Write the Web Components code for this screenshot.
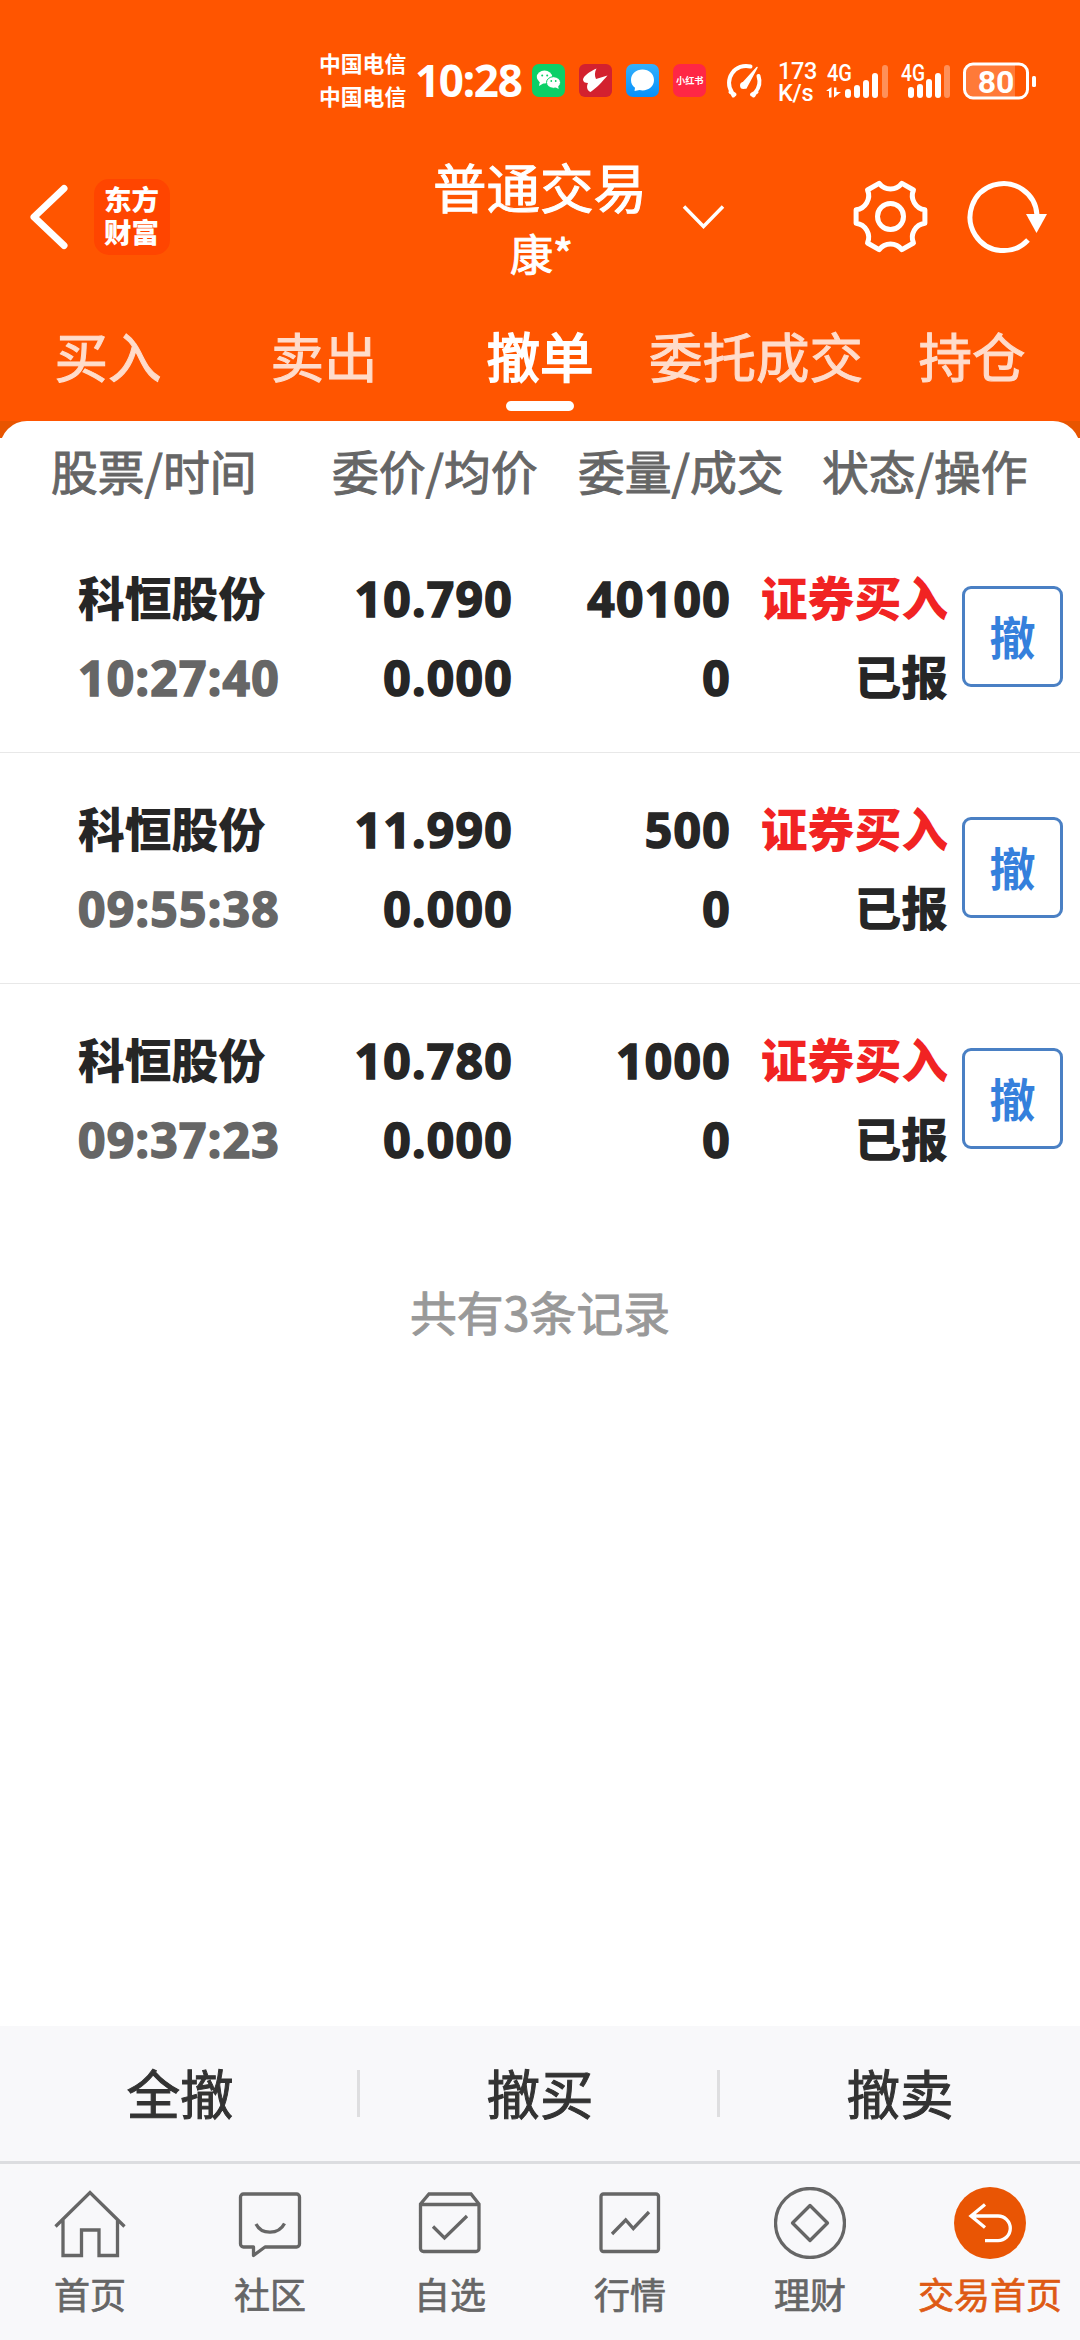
<!DOCTYPE html>
<html lang="zh-CN">
<head>
<meta charset="UTF-8">
<meta name="viewport" content="width=device-width, initial-scale=1.0">
<title>普通交易 - 撤单</title>
<style>
    * { box-sizing: border-box; }
    body {
        margin: 0;
        width: 1080px;
        height: 2340px;
        display: flex;
        flex-direction: column;
        background: #fff;
        font-family: "Noto Sans CJK SC", "Noto Sans", sans-serif;
        overflow: hidden;
    }
</style>
</head>
<body>
    <status-bar></status-bar>
    <trade-header title="普通交易" account="康*"></trade-header>
    <tab-strip>
        <tab-item>买入</tab-item>
        <tab-item>卖出</tab-item>
        <tab-item active>撤单</tab-item>
        <tab-item>委托成交</tab-item>
        <tab-item>持仓</tab-item>
    </tab-strip>
    <order-list total="共有3条记录">
        <order-row name="科恒股份" time="10:27:40" price="10.790" avg="0.000" amount="40100" done="0" side="证券买入" state="已报"></order-row>
        <order-row name="科恒股份" time="09:55:38" price="11.990" avg="0.000" amount="500" done="0" side="证券买入" state="已报"></order-row>
        <order-row name="科恒股份" time="09:37:23" price="10.780" avg="0.000" amount="1000" done="0" side="证券买入" state="已报"></order-row>
    </order-list>
    <action-bar>
        <span>全撤</span>
        <span>撤买</span>
        <span>撤卖</span>
    </action-bar>
    <bottom-nav>
        <nav-item icon="home">首页</nav-item>
        <nav-item icon="chat">社区</nav-item>
        <nav-item icon="box">自选</nav-item>
        <nav-item icon="chart">行情</nav-item>
        <nav-item icon="money">理财</nav-item>
        <nav-item icon="back" active>交易首页</nav-item>
    </bottom-nav>

<script>
// System status bar: carriers, clock, app icons, signal and battery
class StatusBar extends HTMLElement {
    constructor() {
        super();
        this.attachShadow({ mode: 'open' });
    }

    connectedCallback() {
        this.shadowRoot.innerHTML = `
        <style>
            :host {
                display: flex;
                align-items: center;
                height: 161px;
                padding-left: 319px;
                background: #ff5500;
                color: #fff;
                flex: none;
            }
            .carrier { width: 96px; padding-bottom: 4px; font-size: 21.8px; line-height: 33px; font-weight: 700; white-space: nowrap; }
            .clock {
                width: 117px;
                padding-bottom: 2px;
                font: 700 44px/60px "Noto Sans", sans-serif;
                letter-spacing: -1.3px;
            }
            .apps { display: flex; gap: 14px; width: 192px; }
            svg { overflow: visible; flex: none; }
            .apps svg { width: 33px; height: 33px; }
            .gauge { width: 39px; height: 36px; margin-right: 15px; }
            .speed {
                width: 48px;
                padding-top: 3px;
                font: 500 23.500px/22px Roboto, sans-serif;
                letter-spacing: -0.3px;
            }
            .signal { width: 64px; height: 36px; margin-right: 10px; }
            .second { width: 52px; }
            .battery { width: 75px; height: 38px; margin-left: 1px; }
            text { font-family: Roboto, sans-serif; fill: #fff; }
        </style>
        <div class="carrier"><div>中国电信</div><div>中国电信</div></div>
        <div class="clock">10:28</div>
        <div class="apps">
            <svg viewBox="0 0 33 33">
                <rect width="33" height="33" rx="7" fill="#0bd067"/>
                <ellipse cx="12.5" cy="13" rx="7.7" ry="6.4" fill="#fff"/>
                <path d="M8 17l-1 5 5-3z" fill="#fff"/>
                <ellipse cx="21.5" cy="18.5" rx="7" ry="5.8" fill="#fff" stroke="#0bd067" stroke-width="1"/>
                <path d="M23 23l3.6 2-.6-4z" fill="#fff"/>
                <g fill="#0bd067"><circle cx="10.2" cy="11.5" r="1"/><circle cx="15.2" cy="11.5" r="1"/><circle cx="19.3" cy="17" r=".9"/><circle cx="23.7" cy="17" r=".9"/></g>
            </svg>
            <svg viewBox="0 0 33 33">
                <rect width="33" height="33" rx="6" fill="#d3212f"/>
                <path d="M17.500 4.500C10 8 4.500 12 4 15.500c0 2.500 2 3.500 5 3.500-1.500 3.500-1.500 7 2.500 9C17 24.500 23 18 28.500 11.500L17 15c-1.500-3-1.500-7 .5-10.500z" fill="#fff"/>
            </svg>
            <svg viewBox="0 0 33 33">
                <defs><linearGradient id="b" x2="0" y2="1"><stop stop-color="#35b0fb"/><stop offset="1" stop-color="#0590fb"/></linearGradient></defs>
                <rect width="33" height="33" rx="7" fill="url(#b)"/>
                <path d="M16.500 5.500c-6.500 0-11.500 4.500-11.500 10.500 0 3.500 1.500 6 4 7.800L8.500 27l5-1c1 .3 2 .4 3 .4C23 26.400 28 22 28 16S23 5.500 16.500 5.500z" fill="#fff"/>
            </svg>
            <svg viewBox="0 0 33 33">
                <rect width="33" height="33" rx="7" fill="#ff2745"/>
                <text x="3" y="20" font-size="9.200" style="font-family:'Noto Sans CJK SC',sans-serif;font-weight:700">小红书</text>
            </svg>
        </div>
        <svg class="gauge" viewBox="0 0 39 36" fill="none" stroke="#fff" stroke-width="4" stroke-linecap="round">
            <path d="M9.500 32.500 8 29.500a17 17 0 0 1 18.500-26M34.500 13a17 17 0 0 1-3.300 16.500l-1.700 3M6.500 29l4 2.500M28 31.500l4.500-2.500"/>
            <path d="M33 4.500 18 21l4 4z" fill="#fff" stroke-width="1.500" stroke-linejoin="round"/><circle cx="19.500" cy="22.500" r="2" stroke-width="3"/>
        </svg>
        <div class="speed"><div>173</div><div>K/s</div></div>
        <svg class="signal" viewBox="0 0 64 36" fill="#fff">
            <text x="1" y="17.500" font-size="23" font-weight="500" textLength="25" lengthAdjust="spacingAndGlyphs">4G</text>
            <path d="M.5 27.500 5.500 24v10.500H3V28H.5zM8 24.500h2.500V29h4.500l-7 5.500z"/>
            <rect x="19" y="26" width="6" height="9" rx="3"/><rect x="28" y="22" width="6" height="13" rx="3"/>
            <rect x="37" y="17" width="6" height="18" rx="3"/><rect x="46" y="10" width="6" height="25" rx="3"/>
            <rect x="56" y="2" width="6" height="33" rx="3" opacity=".35"/>
        </svg>
        <svg class="signal second" viewBox="0 0 52 36" fill="#fff">
            <text x="1" y="17.500" font-size="23" font-weight="500" textLength="24" lengthAdjust="spacingAndGlyphs">4G</text>
            <rect x="8" y="24" width="6" height="11" rx="3"/><rect x="17" y="21" width="6" height="14" rx="3"/>
            <rect x="26" y="16" width="6" height="19" rx="3"/><rect x="35" y="10" width="6" height="25" rx="3"/>
            <rect x="44" y="2" width="6" height="33" rx="3" opacity=".35"/>
        </svg>
        <svg class="battery" viewBox="0 0 75 38">
            <path d="M9 2h43v34H9a7 7 0 0 1-7-7V9a7 7 0 0 1 7-7z" fill="#fff" opacity=".22"/>
            <rect x="1.500" y="2" width="63" height="34" rx="8.500" fill="none" stroke="#fff" stroke-width="3"/>
            <rect x="69" y="14" width="4" height="11" rx="1.500" fill="#fff"/>
            <text x="33" y="30.500" font-size="32" font-weight="700" text-anchor="middle">80</text>
        </svg>
        `;
    }
}
customElements.define('status-bar', StatusBar);

// Page header with back arrow, brand badge, title and tools
class TradeHeader extends HTMLElement {
    constructor() {
        super();
        this.attachShadow({ mode: 'open' });
    }

    connectedCallback() {
        this.shadowRoot.innerHTML = `
        <style>
            :host {
                display: grid;
                grid-template-columns: 1fr auto 1fr;
                height: 139px;
                background: #ff5500;
                color: #fff;
                flex: none;
            }
            .left, .right { display: flex; align-items: flex-start; }
            .left { padding: 18px 0 0 28px; gap: 26px; }
            .right { padding: 16px 32px 0 35px; }
            .back { width: 40px; height: 76px; }
            .brand {
                width: 76px;
                height: 76px;
                padding: 3px 0 0 10px;
                box-sizing: border-box;
                border-radius: 15px;
                background: #ff4500;
                font-size: 27.5px;
                font-weight: 900;
                line-height: 33px;
                white-space: nowrap;
            }
            .middle { text-align: center; white-space: nowrap; -webkit-text-stroke: 1px; }
            .title { font-size: 53.5px; line-height: 50px; }
            .account { font-size: 43px; line-height: 46px; margin-top: 18px; padding-left: 3px; }
            .down { width: 44px; height: 30px; margin-top: 25px; }
            .gear { width: 80px; height: 80px; margin-left: auto; }
            .reload { width: 84px; height: 80px; margin-left: 33px; }
            svg { display: block; fill: none; stroke: #fff; }
        </style>
        <div class="left">
            <svg class="back" viewBox="0 0 40 76" stroke-width="7"><path d="M36 9.500 6 38l30 28.500" stroke-linejoin="round" stroke-linecap="round"/></svg>
            <div class="brand"><div>东方</div><div>财富</div></div>
        </div>
        <div class="middle">
            <div class="title">${this.getAttribute('title')}</div>
            <div class="account">${this.getAttribute('account')}</div>
        </div>
        <div class="right">
            <svg class="down" viewBox="0 0 44 30" stroke-width="3.500"><path d="M2 4.500l19.500 20L41 4.500"/></svg>
            <svg class="gear" viewBox="-39.500 -39.500 80 80" stroke-width="5" stroke-linejoin="round">
                <path d="M34.400 -6.700V6.700A14.300 14.300 0 0 0 23 26.500L11.400 33.200A14.300 14.300 0 0 0 -11.400 33.200L-23 26.500A14.300 14.300 0 0 0 -34.400 6.700V-6.700A14.300 14.300 0 0 0 -23 -26.500L-11.400 -33.200A14.300 14.300 0 0 0 11.400 -33.200L23 -26.500A14.300 14.300 0 0 0 34.400 -6.700Z"/>
                <circle r="13"/>
            </svg>
            <svg class="reload" viewBox="0 0 84 80" stroke-width="5">
                <path d="M64 63A33.500 33.500 0 1 1 73 38"/>
                <path d="M62 37h21L72.500 56z" fill="#fff" stroke="none"/>
            </svg>
        </div>
        `;
    }
}
customElements.define('trade-header', TradeHeader);

// Container of the tabs
class TabStrip extends HTMLElement {
    constructor() {
        super();
        this.attachShadow({ mode: 'open' });
        this.shadowRoot.innerHTML = `
        <style>
            :host {
                display: grid;
                grid-template-columns: repeat(5, 1fr);
                height: 121px;
                background: #ff5500;
                flex: none;
            }
        </style>
        <slot></slot>
        `;
    }
}
customElements.define('tab-strip', TabStrip);

// One tab, with the white line when it is active
class TabItem extends HTMLElement {
    constructor() {
        super();
        this.attachShadow({ mode: 'open' });
        this.shadowRoot.innerHTML = `
        <style>
            :host {
                display: flex;
                flex-direction: column;
                align-items: center;
                padding-top: 25px;
                color: #ffdccb;
                font-size: 53.5px;
                line-height: 60px;
                white-space: nowrap;
                -webkit-text-stroke: 1px;
            }
            :host([active]) { color: #fff; -webkit-text-stroke: 1.8px; }
            .line { width: 68px; height: 10px; margin-top: 16px; border-radius: 5px; }
            :host([active]) .line { background: #fff; }
        </style>
        <div><slot></slot></div>
        <div class="line"></div>
        `;
    }
}
customElements.define('tab-item', TabItem);

// White sheet with the column titles and the orders
class OrderList extends HTMLElement {
    constructor() {
        super();
        this.attachShadow({ mode: 'open' });
    }

    connectedCallback() {
        this.shadowRoot.innerHTML = `
        <style>
            :host {
                display: block;
                flex: 1;
                min-height: 0;
                background: linear-gradient(#e85500 17px, #fff 17px);
            }
            .sheet { background: #fff; border-radius: 27px 27px 0 0; height: 100%; }
            .head {
                display: flex;
                height: 101px;
                padding: 19px 0 0 51px;
                box-sizing: border-box;
                color: #666;
                font-size: 46.8px;
                line-height: 60px;
                white-space: nowrap;
                -webkit-text-stroke: 1px;
            }
            .head div:nth-child(1) { width: 281px; }
            .head div:nth-child(2) { width: 246px; }
            .head div:nth-child(3) { width: 244px; }
            .total {
                padding-top: 61px;
                text-align: center;
                color: #999;
                font-size: 46.8px;
                line-height: 70px;
                -webkit-text-stroke: 1px;
            }
        </style>
        <div class="sheet">
            <div class="head"><div>股票/时间</div><div>委价/均价</div><div>委量/成交</div><div>状态/操作</div></div>
            <slot></slot>
            <div class="total">${this.getAttribute('total')}</div>
        </div>
        `;
    }
}
customElements.define('order-list', OrderList);

// One order that can still be cancelled
class OrderRow extends HTMLElement {
    constructor() {
        super();
        this.attachShadow({ mode: 'open' });
    }

    connectedCallback() {
        const v = (name) => this.getAttribute(name);

        this.shadowRoot.innerHTML = `
        <style>
            :host {
                display: grid;
                grid-template-columns: 250px 185px 218px 217px 101px;
                height: 231px;
                padding: 34px 0 0 78px;
                box-sizing: border-box;
                border-bottom: 1px solid #e8e8e8;
                color: #262626;
                font-size: 46.8px;
                line-height: 79px;
                font-weight: 900;
                white-space: nowrap;
            }
            :host(:last-of-type) { border-bottom-color: transparent; }
            .right { text-align: right; }
            .num {
                position: relative;
                top: 3px;
                font-family: "Noto Sans", sans-serif;
                font-size: 48px;
                font-weight: 700;
                letter-spacing: 1.3px;
                -webkit-text-stroke: 1.6px;
            }
            .time { color: #666; }
            .buy { color: #f12323; }
            .cancel {
                width: 101px;
                height: 101px;
                margin: 30px 0 0 14px;
                box-sizing: border-box;
                border: 3px solid #4a80c4;
                border-radius: 9px;
                color: #3580dc;
                font-size: 46px;
                font-weight: 700;
                line-height: 92px;
                text-align: center;
            }
        </style>
        <div><div>${v('name')}</div><div class="num time">${v('time')}</div></div>
        <div class="right num"><div>${v('price')}</div><div>${v('avg')}</div></div>
        <div class="right num"><div>${v('amount')}</div><div>${v('done')}</div></div>
        <div class="right"><div class="buy">${v('side')}</div><div>${v('state')}</div></div>
        <div class="cancel">撤</div>
        `;
    }
}
customElements.define('order-row', OrderRow);

// Bulk cancel buttons
class ActionBar extends HTMLElement {
    constructor() {
        super();
        this.attachShadow({ mode: 'open' });
        this.shadowRoot.innerHTML = `
        <style>
            :host {
                display: grid;
                grid-template-columns: repeat(3, 1fr);
                align-items: center;
                height: 135px;
                background: #f8f8fa;
                color: #333;
                font-size: 53.5px;
                line-height: 43px;
                flex: none;
                -webkit-text-stroke: 1px;
            }
            ::slotted(span) { text-align: center; padding: 0 0 4px 3px; border-right: 3px solid #dedee0; }
            ::slotted(span:last-child) { border-right-color: transparent; }
        </style>
        <slot></slot>
        `;
    }
}
customElements.define('action-bar', ActionBar);

// Bottom navigation
class BottomNav extends HTMLElement {
    constructor() {
        super();
        this.attachShadow({ mode: 'open' });
        this.shadowRoot.innerHTML = `
        <style>
            :host {
                display: grid;
                grid-template-columns: repeat(6, 1fr);
                height: 179px;
                box-sizing: border-box;
                border-top: 3px solid #dcdde0;
                background: #f8f8fa;
                flex: none;
            }
        </style>
        <slot></slot>
        `;
    }
}
customElements.define('bottom-nav', BottomNav);

const ICONS = {
    home: '<path d="M1.500 39.500 36 5.500l34.500 34M9 32v36.500h18.500V43H45v25.500h18.500V32"/>',
    chat: '<path d="M19.500 60H9.500a3 3 0 0 1-3-3V10a3 3 0 0 1 3-3h53a3 3 0 0 1 3 3v47a3 3 0 0 1-3 3H31l-11.500 8.500z" stroke-linejoin="round"/><path d="M22 37c5.500 11 22.500 11 28.500-.500"/>',
    box: '<path d="M6.500 17 15 7h42l8 10v44.500a3 3 0 0 1-3 3H9.500a3 3 0 0 1-3-3zM6.500 17.500H65M19 39.500l11.500 11.500 22.500-22"/>',
    chart: '<rect x="7" y="7" width="57.500" height="57.500" rx="2.500"/><path d="M18 47l13.700-14 7.600 8.500L55 25"/>',
    money: '<circle cx="36" cy="36" r="34.500"/><path d="M36 18.500 53.500 36 36 53.500 18.500 36z" stroke-linejoin="round"/>',
    back: '<circle cx="36" cy="36" r="36" fill="#e95504" stroke="none"/><path d="M31 17.500 17 29l14 11.500M17 29h27a12.300 12.300 0 0 1 0 24.600H31" stroke="#fff"/>'
};

// Navigation entry: icon above its label
class NavItem extends HTMLElement {
    constructor() {
        super();
        this.attachShadow({ mode: 'open' });
    }

    connectedCallback() {
        this.shadowRoot.innerHTML = `
        <style>
            :host {
                display: flex;
                flex-direction: column;
                align-items: center;
                padding-top: 23px;
                color: #666;
                font-size: 36px;
                line-height: 44px;
                white-space: nowrap;
                -webkit-text-stroke: 0.7px;
            }
            :host([active]) { color: #de5a14; }
            svg { width: 72px; height: 72px; fill: none; stroke: #666; stroke-width: 3.3; }
            .label { margin-top: 12px; }
        </style>
        <svg viewBox="0 0 72 72">${ICONS[this.getAttribute('icon')]}</svg>
        <div class="label"><slot></slot></div>
        `;
    }
}
customElements.define('nav-item', NavItem);
</script>
</body>
</html>
